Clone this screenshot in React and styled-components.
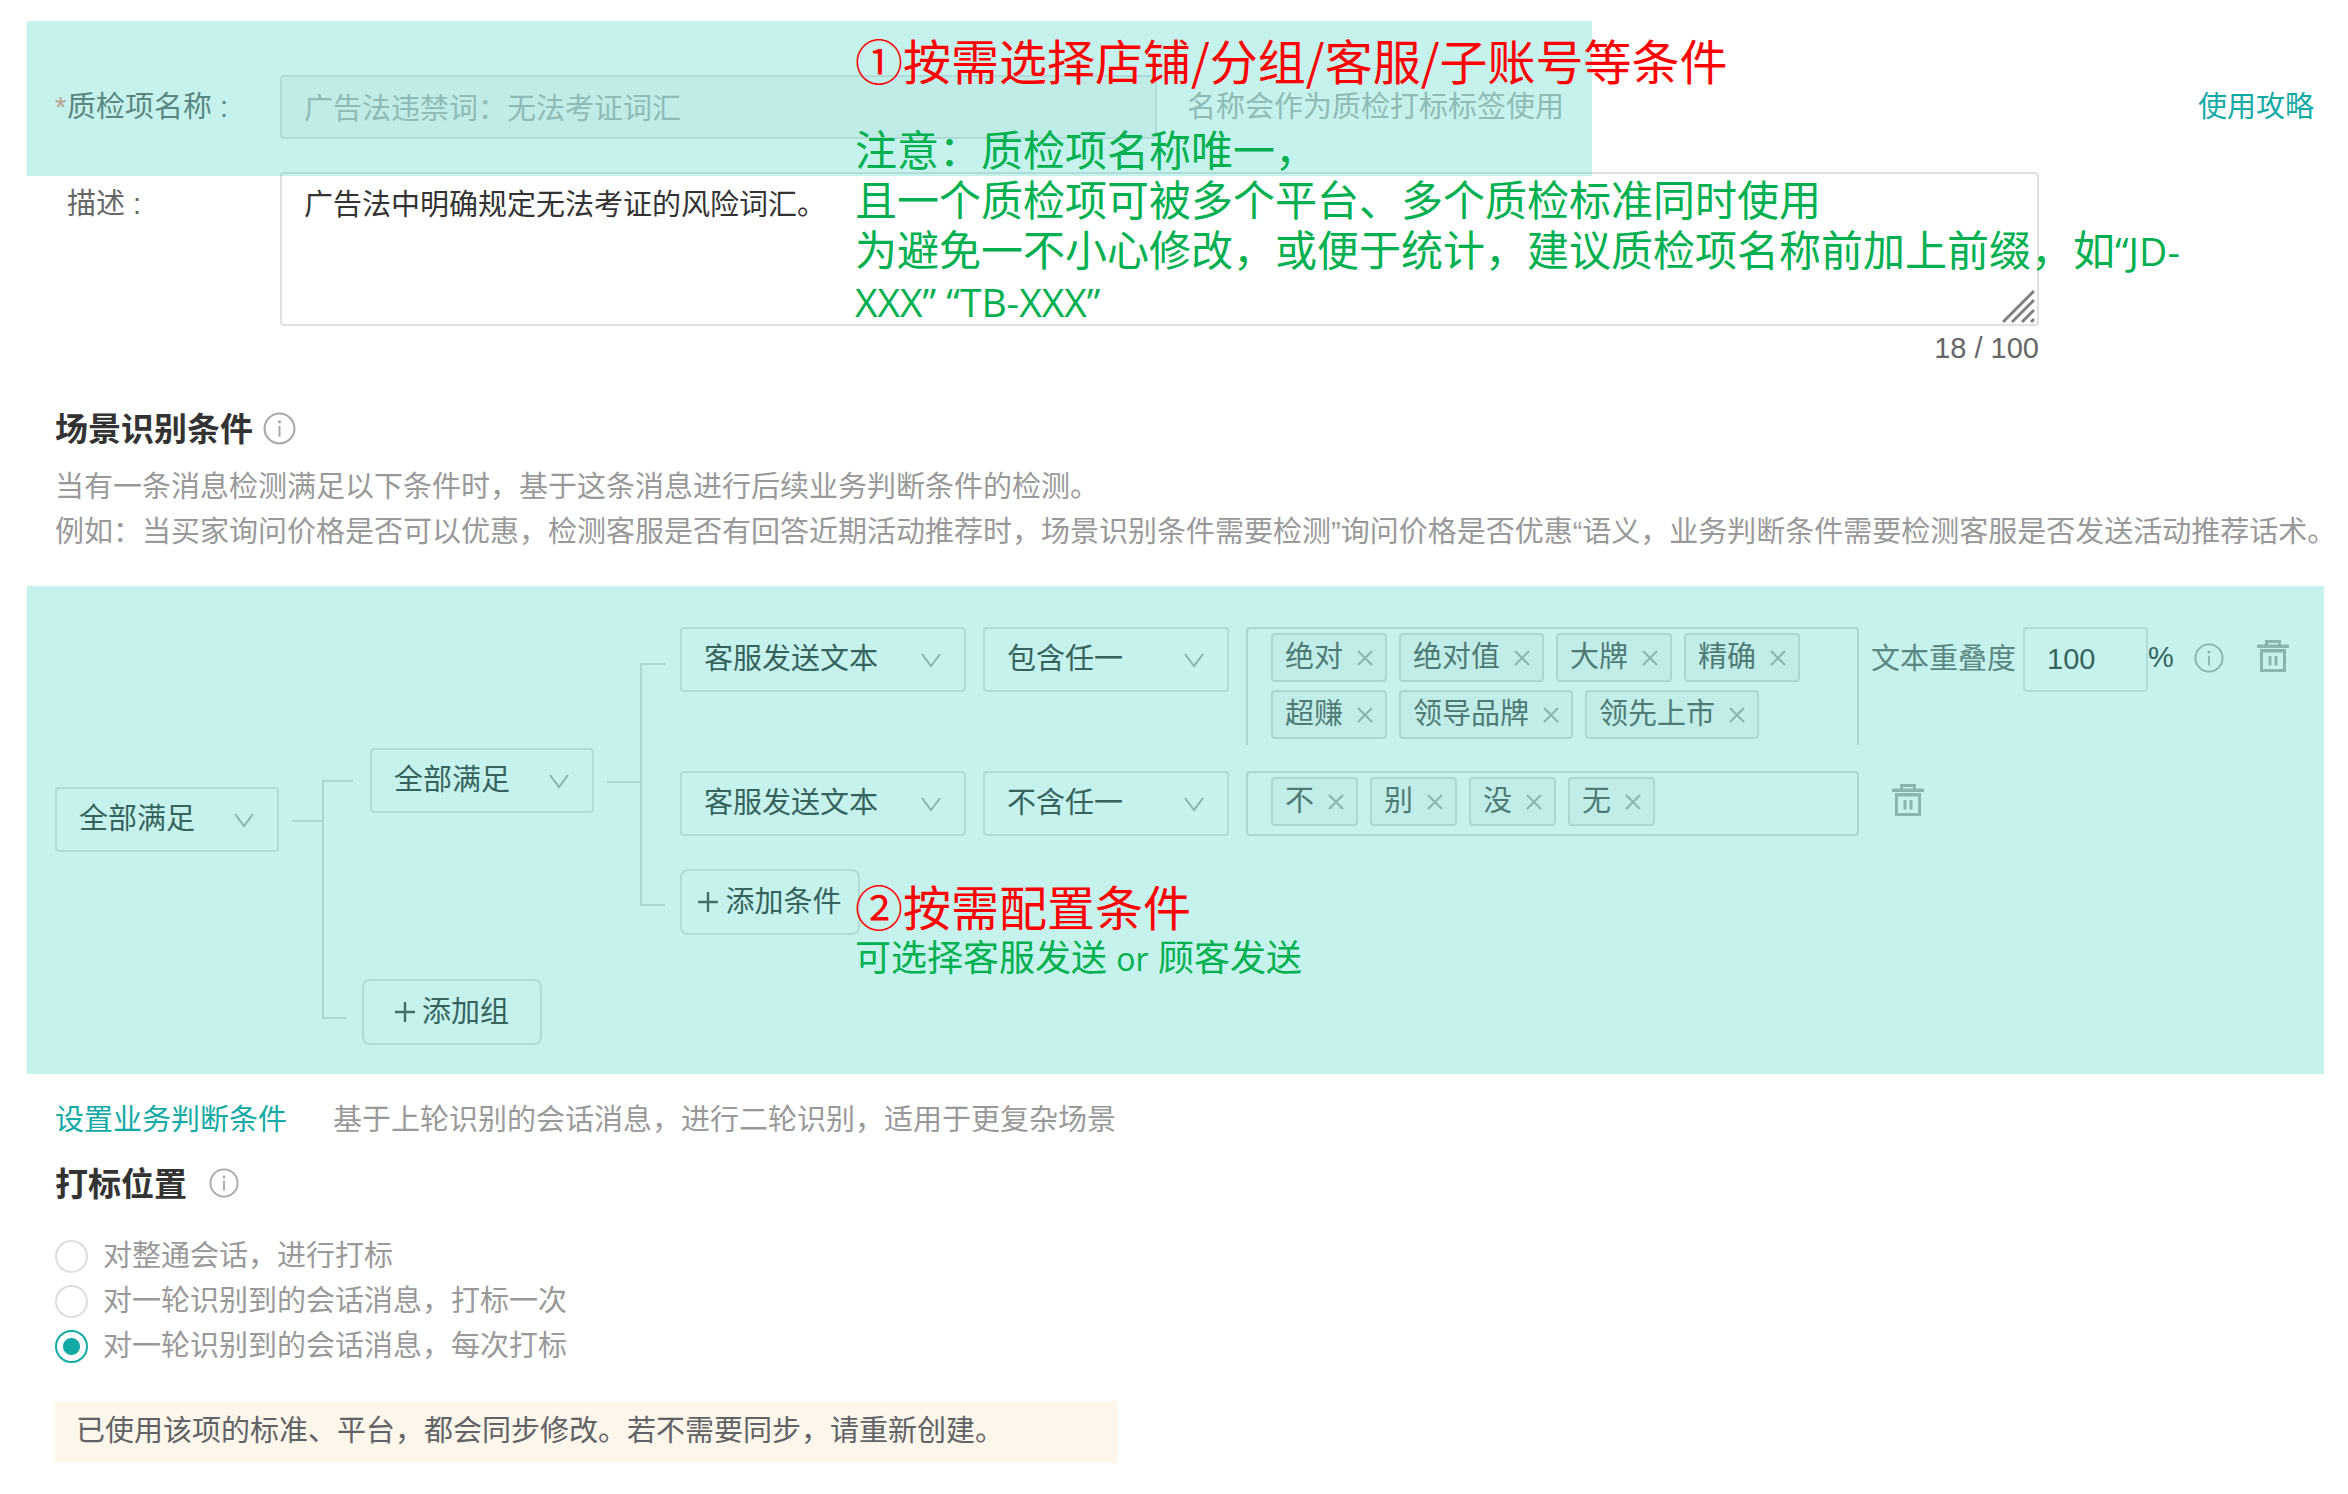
import React, { useState } from "react";
import styled, { createGlobalStyle, css } from "styled-components";

const color = {
  text: "#333",
  label: "#666",
  muted: "#999",
  disabled: "#b0b0b0",
  icon: "#a8a8a8",
  border: "#e0e0e0",
  line: "#d9d9d9",
  teal: "#12aaa5",
  mark: "rgba(62, 212, 192, 0.3)",
  red: "#ff0000",
  green: "#00b050",
};

const Global = createGlobalStyle`
  *, *::before, *::after { box-sizing: border-box; }
  body { margin: 0; background: #fff; }
  body, button, input, select, textarea {
    font-family: "Liberation Sans", "Noto Sans CJK SC", sans-serif;
    font-size: 29px;
    line-height: 45px;
    color: ${color.text};
  }
`;

const Page = styled.main`
  position: relative;
  padding: 21px 24px 30px 27px;
`;

const marked = css`
  position: relative;
  &::after {
    content: "";
    position: absolute;
    inset: 0;
    z-index: 1;
    background: ${color.mark};
    pointer-events: none;
  }
`;

const Link = styled.a`
  color: ${color.teal};
  text-decoration: none;
  white-space: nowrap;
`;

const Header = styled.div`
  display: flex;
  align-items: flex-start;
  justify-content: space-between;
  padding-right: 10px;
  > ${Link} { padding-top: 64px; }
`;

const NameArea = styled.div`
  ${marked}
  flex: 0 1 1565px;
  display: flex;
  align-items: center;
  padding: 54px 28px 37px;
`;

const FieldLabel = styled.label`
  flex: 0 0 225px;
  padding-left: ${(p) => (p.$required ? 0 : 12)}px;
  color: ${color.label};
  white-space: nowrap;
`;

const Star = styled.span`
  display: inline-block;
  width: 12px;
  color: #f08a80;
`;

const field = css`
  border: 2px solid ${color.border};
  border-radius: 4px;
  background: #fff;
  outline: none;
`;

const NameInput = styled.input`
  ${field}
  flex: 0 1 880px;
  min-width: 0;
  height: 64px;
  padding: 0 22px 2px;
  background: #f7f7f7;
  color: ${color.disabled};
`;

const Hint = styled.span`
  margin-left: 30px;
  color: #b0b0b0;
  white-space: nowrap;
`;

const DescRow = styled.div`
  display: flex;
  align-items: flex-start;
  margin-top: -4px;
  padding-left: 28px;
  ${FieldLabel} { padding-top: 10px; }
`;

const DescField = styled.div`
  position: relative;
  flex: 0 1 1759px;
  display: flex;
  flex-direction: column;
`;

const TextArea = styled.textarea`
  ${field}
  height: 154px;
  padding: 9px 22px;
  resize: none;
`;

const Grip = styled.svg`
  position: absolute;
  right: 4px;
  top: 118px;
`;

const Counter = styled.span`
  align-self: flex-end;
  color: ${color.label};
`;

const Heading = styled.h2`
  display: flex;
  align-items: center;
  gap: ${(p) => p.$gap}px;
  margin: ${(p) => p.$top}px 0 0 28px;
  font-size: 33px;
  line-height: 50px;
  font-weight: 700;
  svg { margin-bottom: 4px; }
`;

const Note = styled.p`
  margin: 10px 0 0 28px;
  color: ${color.muted};
  white-space: nowrap;
`;

const Panel = styled.section`
  ${marked}
  margin-top: 31px;
  padding: 41px 0 29px 28px;
`;

const Tree = styled.div`
  display: flex;
  align-items: flex-start;
`;

const Branches = styled.div`
  flex: 1;
  min-width: 0;
  display: flex;
  flex-direction: column;
  align-items: flex-start;
`;

const Group = styled.div`
  display: flex;
  align-items: flex-start;
  width: 100%;
  margin-bottom: 44px;
  padding-left: 8px;
`;

const Drop = styled.div`
  position: relative;
  flex: 0 0 ${(p) => p.$width}px;
  margin-top: ${(p) => p.$top || 0}px;
  svg {
    position: absolute;
    right: 25px;
    top: 26px;
    pointer-events: none;
  }
`;

const Select = styled.select`
  ${field}
  display: block;
  appearance: none;
  width: 100%;
  height: 65px;
  padding: 0 22px;
`;

const Stub = styled.span`
  flex: 0 0 ${(p) => p.$width}px;
  height: 2px;
  margin: ${(p) => p.$top}px 0 0 13px;
  background: ${color.line};
`;

const Bracket = styled.div`
  align-self: stretch;
  flex: 0 0 ${(p) => p.$width}px;
  display: flex;
  flex-direction: column;
  justify-content: space-between;
  margin: ${(p) => p.$margin};
  border-left: 2px solid ${color.line};
  &::before, &::after {
    content: "";
    width: 100%;
    height: 2px;
    background: ${color.line};
  }
  &::after { width: 23px; }
`;

const Row = styled.div`
  display: flex;
  align-items: flex-start;
  width: 100%;
  margin-bottom: ${(p) => p.$gap}px;
  ${Drop} { margin-right: 17px; }
`;

const TagBox = styled.div`
  ${field}
  flex: 0 1 613px;
  display: flex;
  flex-wrap: wrap;
  gap: 8px 12px;
  padding: 4px 23px 8px;
  border-color: ${color.line};
  ${(p) => p.$open && css`
    padding-bottom: 6px;
    border-bottom: 0;
    border-radius: 4px 4px 0 0;
  `}
`;

const TagItem = styled.span`
  display: flex;
  align-items: center;
  gap: 14px;
  height: 49px;
  padding: 0 12px;
  border: 2px solid ${color.line};
  border-radius: 4px;
  background: #f8f8f8;
  color: #555;
  white-space: nowrap;
`;

const IconButton = styled.button`
  display: flex;
  padding: 0;
  border: 0;
  background: none;
  cursor: pointer;
`;

const Extras = styled.div`
  display: flex;
  align-items: center;
  height: 65px;
  margin-left: ${(p) => p.$left}px;
  > ${IconButton} { padding-bottom: 8px; }
`;

const OverlapLabel = styled.label`
  margin-right: 7px;
  color: ${color.label};
  white-space: nowrap;
`;

const OverlapInput = styled.input`
  ${field}
  width: 125px;
  height: 65px;
  padding: 0 22px;
`;

const Percent = styled.span`
  padding-bottom: 4px;
`;

const InfoGap = styled.span`
  display: flex;
  margin: 0 33px 4px 20px;
`;

const AddButton = styled.button`
  display: flex;
  align-items: center;
  justify-content: center;
  gap: 7px;
  width: 180px;
  height: 66px;
  padding: 0;
  border: 2px solid ${color.border};
  border-radius: 8px;
  background: #fff;
  white-space: nowrap;
`;

const LinkRow = styled.div`
  display: flex;
  gap: 46px;
  margin: 24px 0 0 28px;
  color: ${color.muted};
`;

const Radios = styled.div`
  margin: 24px 0 0 28px;
`;

const RadioLabel = styled.label`
  display: flex;
  align-items: center;
  gap: 15px;
  color: ${color.muted};
`;

const Radio = styled.input`
  appearance: none;
  width: 33px;
  height: 33px;
  margin: 0;
  border: 2px solid #ddd;
  border-radius: 50%;
  background: #fff;
  &:checked {
    border-color: ${color.teal};
    background: radial-gradient(circle, ${color.teal} 8px, #fff 9px);
  }
`;

const Alert = styled.p`
  max-width: 1063px;
  margin: 32px 0 0 28px;
  padding: 8px 21px 9px;
  background: #fdf6ea;
  color: #606266;
`;

const Callout = styled.div`
  position: absolute;
  z-index: 2;
  left: ${(p) => p.$left}px;
  top: ${(p) => p.$top}px;
  font-family: "Open Sans", "Noto Sans CJK SC", sans-serif;
  white-space: nowrap;
  pointer-events: none;
  p { margin: 0; }
`;

const Step = styled.p`
  font-family: "Noto Sans CJK SC", sans-serif;
  font-size: 48px;
  line-height: 58px;
  color: ${color.red};
`;

const Tips = styled.div`
  padding-top: 37px;
  font-size: 42px;
  line-height: 50px;
  color: ${color.green};
`;

const SmallTip = styled.p`
  padding-top: 3px;
  font-size: 36px;
  line-height: 42px;
  color: ${color.green};
`;

const Latin = styled.span`
  font-size: ${(p) => p.$size}px;
`;

const Chevron = () => (
  <svg width="20" height="15" viewBox="0 0 20 15" fill="none" stroke={color.icon} strokeWidth="2">
    <path d="M1 1 L10 13 L19 1" />
  </svg>
);

const Info = ({ size }) => (
  <svg width={size} height={size} viewBox="0 0 32 32" fill="none" stroke={color.icon} strokeWidth="2">
    <circle cx="16" cy="16" r="14.5" />
    <path d="M16 13.5 V24" />
    <circle cx="16" cy="9.5" r="1.6" fill={color.icon} stroke="none" />
  </svg>
);

const Trash = () => (
  <svg width="32" height="32" viewBox="0 0 32 32" fill={color.icon}>
    <path d="M8 0 H24 V4.5 H32 V8 H0 V4.5 H8 Z M11 3 V4.5 H21 V3 Z" fillRule="evenodd" />
    <path d="M3 9 H29 V32 H3 Z M6 12.5 V29 H26 V12.5 Z" fillRule="evenodd" />
    <path d="M11.5 16 H14.5 V25.5 H11.5 Z M17.5 16 H20.5 V25.5 H17.5 Z" />
  </svg>
);

const Cross = () => (
  <svg width="16" height="16" viewBox="0 0 16 16" fill="none" stroke={color.icon} strokeWidth="2">
    <path d="M1 1 L15 15 M15 1 L1 15" />
  </svg>
);

const Plus = () => (
  <svg width="20" height="20" viewBox="0 0 20 20" fill="none" stroke="#444" strokeWidth="2.4">
    <path d="M10 0 V20 M0 10 H20" />
  </svg>
);

const Dropdown = ({ width, top, label, options }) => (
  <Drop $width={width} $top={top}>
    <Select aria-label={label}>
      {options.map((o) => <option key={o}>{o}</option>)}
    </Select>
    <Chevron />
  </Drop>
);

const Tags = ({ initial, open }) => {
  const [tags, setTags] = useState(initial);
  return (
    <TagBox $open={open}>
      {tags.map((t) => (
        <TagItem key={t}>
          {t}
          <IconButton type="button" aria-label={`删除${t}`} onClick={() => setTags(tags.filter((x) => x !== t))}>
            <Cross />
          </IconButton>
        </TagItem>
      ))}
    </TagBox>
  );
};

const positions = [
  "对整通会话，进行打标",
  "对一轮识别到的会话消息，打标一次",
  "对一轮识别到的会话消息，每次打标",
];

export default function App() {
  const [position, setPosition] = useState(2);
  return (
    <Page>
      <Global />
      <Header>
        <NameArea>
          <FieldLabel htmlFor="name" $required><Star>*</Star>质检项名称 :</FieldLabel>
          <NameInput id="name" disabled defaultValue="广告法违禁词：无法考证词汇" />
          <Hint>名称会作为质检打标标签使用</Hint>
        </NameArea>
        <Link href="#guide">使用攻略</Link>
      </Header>
      <DescRow>
        <FieldLabel htmlFor="desc">描述 :</FieldLabel>
        <DescField>
          <TextArea id="desc" defaultValue="广告法中明确规定无法考证的风险词汇。" />
          <Grip width="33" height="33" viewBox="0 0 33 33" fill="none" stroke="#808080" strokeWidth="3">
            <path d="M1 32 L32 1 M10 32 L32 10 M20 32 L32 20 M29 32 L32 29" />
          </Grip>
          <Counter>18 / 100</Counter>
        </DescField>
      </DescRow>

      <Heading $top={34} $gap={10}>场景识别条件<Info size={33} /></Heading>
      <Note>
        当有一条消息检测满足以下条件时，基于这条消息进行后续业务判断条件的检测。<br />
        例如：当买家询问价格是否可以优惠，检测客服是否有回答近期活动推荐时，场景识别条件需要检测”询问价格是否优惠“语义，业务判断条件需要检测客服是否发送活动推荐话术。
      </Note>

      <Panel>
        <Tree>
          <Dropdown width={224} top={160} label="组关系" options={["全部满足", "任一满足"]} />
          <Stub $width={30} $top={193} />
          <Bracket $width={31} $margin="153px 9px 26px 0" />
          <Branches>
            <Group>
              <Dropdown width={224} top={121} label="条件关系" options={["全部满足", "任一满足"]} />
              <Stub $width={33} $top={154} />
              <Bracket $width={25} $margin="36px 15px 29px 0" />
              <Branches>
                <Row $gap={26}>
                  <Dropdown width={286} label="检测对象" options={["客服发送文本", "顾客发送文本"]} />
                  <Dropdown width={246} label="匹配方式" options={["包含任一", "不含任一"]} />
                  <Tags open initial={["绝对", "绝对值", "大牌", "精确", "超赚", "领导品牌", "领先上市"]} />
                  <Extras $left={12}>
                    <OverlapLabel htmlFor="overlap">文本重叠度</OverlapLabel>
                    <OverlapInput id="overlap" defaultValue="100" />
                    <Percent>%</Percent>
                    <InfoGap><Info size={30} /></InfoGap>
                    <IconButton type="button" aria-label="删除条件"><Trash /></IconButton>
                  </Extras>
                </Row>
                <Row $gap={33}>
                  <Dropdown width={286} label="检测对象" options={["客服发送文本", "顾客发送文本"]} />
                  <Dropdown width={246} label="匹配方式" options={["不含任一", "包含任一"]} />
                  <Tags initial={["不", "别", "没", "无"]} />
                  <Extras $left={33}>
                    <IconButton type="button" aria-label="删除条件"><Trash /></IconButton>
                  </Extras>
                </Row>
                <AddButton type="button"><Plus />添加条件</AddButton>
              </Branches>
            </Group>
            <AddButton type="button"><Plus />添加组</AddButton>
          </Branches>
        </Tree>
        <Callout $left={828} $top={290}>
          <Step>②按需配置条件</Step>
          <SmallTip>可选择客服发送 <Latin $size={32}>or</Latin> 顾客发送</SmallTip>
        </Callout>
      </Panel>

      <LinkRow>
        <Link href="#business">设置业务判断条件</Link>
        <span>基于上轮识别的会话消息，进行二轮识别，适用于更复杂场景</span>
      </LinkRow>

      <Heading $top={17} $gap={22}>打标位置<Info size={30} /></Heading>
      <Radios role="radiogroup" aria-label="打标位置">
        {positions.map((p, i) => (
          <RadioLabel key={p}>
            <Radio type="radio" name="position" checked={position === i} onChange={() => setPosition(i)} />
            {p}
          </RadioLabel>
        ))}
      </Radios>
      <Alert>已使用该项的标准、平台，都会同步修改。若不需要同步，请重新创建。</Alert>

      <Callout $left={855} $top={30}>
        <Step>①按需选择店铺/分组/客服/子账号等条件</Step>
        <Tips>
          <p>注意：质检项名称唯一，</p>
          <p>且一个质检项可被多个平台、多个质检标准同时使用</p>
          <p>为避免一不小心修改，或便于统计，建议质检项名称前加上前缀，如<Latin $size={39}>“JD-</Latin></p>
          <p><Latin $size={39}>XXX” “TB-XXX”</Latin></p>
        </Tips>
      </Callout>
    </Page>
  );
}
